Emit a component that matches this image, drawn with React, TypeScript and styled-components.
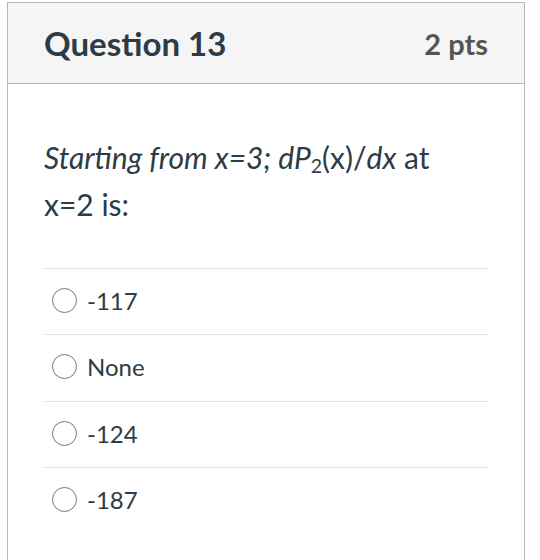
import React from "react";
import styled, { createGlobalStyle } from "styled-components";

const GlobalStyle = createGlobalStyle`
  body {
    margin: 0;
    background: #ffffff;
    font-family: Lato, "Liberation Sans", sans-serif;
    color: #2d3b45;
  }
`;

const Page = styled.div`
  width: 540px;
  height: 560px;
  overflow: hidden;
  padding: 2px 0 0 7px;
  box-sizing: border-box;
`;

const Card = styled.div`
  width: 518px;
  height: 600px;
  box-sizing: border-box;
  border: 1px solid #b5b5b5;
  background: #ffffff;
`;

const Header = styled.div`
  height: 81px;
  box-sizing: border-box;
  display: flex;
  align-items: center;
  justify-content: space-between;
  padding: 0 36px;
  background: #f5f5f5;
  border-bottom: 1px solid #b5b5b5;
`;

const Title = styled.h2`
  margin: 0;
  font-size: 33px;
  font-weight: 700;
  color: #2d3b45;
`;

const Points = styled.span`
  font-size: 29px;
  font-weight: 700;
  color: #555555;
`;

const Body = styled.div`
  padding: 50px 36px 0;
`;

const QuestionText = styled.p`
  margin: 0 0 40px;
  max-width: 420px;
  font-size: 30px;
  line-height: 47px;
`;

const Sub = styled.sub`
  font-size: 0.65em;
  vertical-align: -0.2em;
  line-height: 0;
`;

const Answers = styled.div`
  display: flex;
  flex-direction: column;
`;

const Answer = styled.label`
  display: flex;
  align-items: center;
  gap: 10px;
  height: 66.3px;
  box-sizing: border-box;
  padding-left: 8px;
  padding-bottom: 2px;
  border-top: 1px solid #e2e2e2;
  font-size: 24px;
  color: #2d3b45;
`;

const Radio = styled.span`
  width: 25px;
  height: 25px;
  box-sizing: border-box;
  border-radius: 50%;
  border: 1.5px solid #777777;
  flex-shrink: 0;
`;

const options = ["-117", "None", "-124", "-187"];

const App = () => {
  return (
    <Page>
      <GlobalStyle />
      <Card>
        <Header>
          <Title>Question 13</Title>
          <Points>2 pts</Points>
        </Header>
        <Body>
          <QuestionText>
            <em>Starting from x=3; dP</em>
            <Sub>2</Sub>(x)/<em>dx</em> at x=2 is:
          </QuestionText>
          <Answers>
            {options.map((o) => (
              <Answer key={o}>
                <Radio />
                {o}
              </Answer>
            ))}
          </Answers>
        </Body>
      </Card>
    </Page>
  );
};

export default App;
